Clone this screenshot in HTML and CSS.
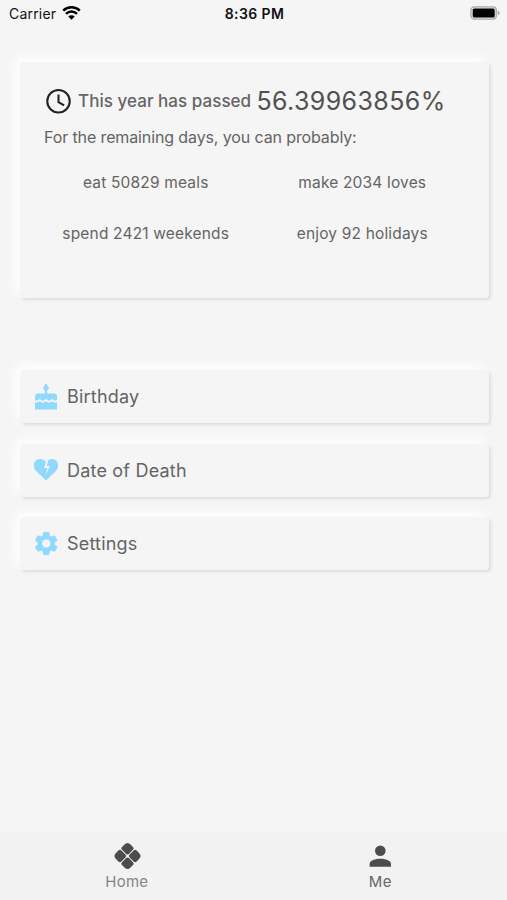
FILE: index.html
```html
<!DOCTYPE html>
<html lang="en">
<head>
<meta charset="utf-8">
<title>Life progress</title>
<link rel="stylesheet" href="styles.css">
</head>
<body>
<header class="status">
  <div class="carrier"><span>Carrier</span>
    <svg width="19" height="14" viewBox="0 0 19 14" fill="none" stroke="#000" stroke-width="2.5"><path d="M1.2 4.7a12 12 0 0 1 16.6 0M4 7.8a8 8 0 0 1 11 0"/><path d="M6.3 10.5a4.6 4.6 0 0 1 6.4 0L9.5 13.7z" fill="#000" stroke="none"/></svg>
  </div>
  <time class="clock">8:36 PM</time>
  <svg class="battery" width="30" height="14" viewBox="0 0 30 14"><rect x=".9" y=".9" width="25.4" height="12.2" rx="3.4" fill="#e5e5e5" stroke="#a9a9a9" stroke-width="1.3"/><rect x="2.7" y="2.5" width="22" height="9" rx="1.6"/><path d="M27.7 4.6q2 .8 2 2.4t-2 2.4z" fill="#aaa"/></svg>
</header>
<main>
  <section class="card summary">
    <div class="headline">
      <svg width="29" height="29" viewBox="0 0 24 24" fill="none" stroke="#222" stroke-width="1.7"><circle cx="12" cy="11.800" r="9.300"/><path d="M12 6.300V12.600l4.600 2.600"/></svg>
      <span class="label">This year has passed</span><strong class="percent">56.39963856%</strong>
    </div>
    <p class="remaining">For the remaining days, you can probably:</p>
    <div class="stats"><span>eat 50829 meals</span><span>make 2034 loves</span><span>spend 2421 weekends</span><span>enjoy 92 holidays</span></div>
  </section>
  <nav class="menu">
    <a class="card item"><svg width="24" height="28" viewBox="0 0 24 28"><path d="M12 .2l3.200 5.300-2.100 2v3H20a3 3 0 0 1 3 3v3.500c-2 1.200-3.200.2-4.700-1.300-2.300 2.400-4 2.400-6.300 0-2.300 2.400-4 2.400-6.300 0-1.500 1.500-2.700 2.500-4.700 1.300v-3.500a3 3 0 0 1 3-3h6.900v-3L8.800 5.500z"/><path d="M1 19.200c2 .7 3.400.2 4.700-.9 2.300 1.800 4 1.800 6.300 0 2.300 1.800 4 1.800 6.300 0 1.300 1.100 2.700 1.600 4.700.9v7.200H1z"/></svg><span>Birthday</span></a>
    <a class="card item"><svg class="heart" width="26" height="28" viewBox="0 0 26 28"><path d="M13 24.600L3.300 15.300C-1 11 .5 2.900 7.200 2.900c2.300 0 4.300 1.100 5.800 3.200 1.500-2.100 3.500-3.200 5.800-3.200 6.700 0 8.200 8.100 3.900 12.400z"/><path class="crack" d="M13.200 5.600l-2 6.300h3.100L12.800 19.600l3.900-9.700h-2.900l1.500-5.800z"/></svg><span>Date of Death</span></a>
    <a class="card item"><svg class="gear" width="28" height="28" viewBox="0 0 24 24"><g transform="translate(.2 -.4)"><path d="M19.140 12.940c.04-.3.060-.610.060-.940s-.020-.640-.070-.940l2.030-1.580a.49.49 0 0 0 .12-.61l-1.920-3.320a.488.488 0 0 0-.59-.22l-2.390.96c-.5-.38-1.030-.7-1.620-.94l-.36-2.540a.484.484 0 0 0-.48-.41h-3.840c-.24 0-.43.17-.47.41l-.36 2.540c-.59.24-1.130.57-1.620.94l-2.390-.96c-.22-.08-.47 0-.59.22L2.740 8.870c-.12.21-.08.47.12.61l2.030 1.580c-.05.3-.09.63-.09.94s.02.64.07.94l-2.030 1.580a.49.49 0 0 0-.12.61l1.920 3.320c.12.22.37.29.59.22l2.390-.96c.5.38 1.030.7 1.620.94l.36 2.540c.05.24.24.41.48.41h3.840c.24 0 .44-.17.47-.41l.36-2.540c.59-.24 1.130-.56 1.620-.94l2.390.96c.22.08.47 0 .59-.22l1.920-3.320c.12-.22.07-.47-.12-.61z"/><circle class="hub" cx="12" cy="12" r="3.500"/></g></svg><span>Settings</span></a>
  </nav>
</main>
<footer class="tabs">
  <a class="tab home"><svg width="28" height="28" viewBox="0 0 28 28"><g transform="translate(.5 0) rotate(45 14 14)"><path id="petal" d="M8 3.700h3.400q2.100 0 2.100 2.100v5.700q0 2-2 2H5.800q-2.100 0-2.100-2.100V8Q3.700 3.700 8 3.700z"/><use href="#petal" transform="rotate(90 14 14)"/><use href="#petal" transform="rotate(180 14 14)"/><use href="#petal" transform="rotate(270 14 14)"/></g></svg><span>Home</span></a>
  <a class="tab me"><svg width="28" height="28" viewBox="0 0 28 28"><circle cx="14.300" cy="8.700" r="5.300"/><path d="M3.600 24.700v-2.800c0-3.600 6-5.200 10.700-5.200S25 18.300 25 21.900v2.800z"/></svg><span>Me</span></a>
</footer>
</body>
</html>
```

FILE: styles.css
```css
* { box-sizing: border-box; }
body { margin: 0; height: 900px; display: flex; flex-direction: column; background: #f5f5f5; color: #646464; font-family: Inter, "Liberation Sans", sans-serif; }
svg { display: block; flex: none; }
.status { height: 26px; padding: 0 7px 0 9px; display: grid; grid-template-columns: 1fr auto 1fr; align-items: center; color: #111; }
.carrier { display: flex; align-items: center; gap: 6px; font-size: 14px; letter-spacing: .2px; }
.clock { font-size: 14px; font-weight: 600; letter-spacing: .4px; }
.battery { justify-self: end; }
main { flex: 1; padding: 36px 18px 0 20px; }
.card { background: #f5f5f5; border-radius: 4px; box-shadow: 2px 2px 3px #dedede, -5px -5px 12px #fff; }
.summary { height: 236px; padding: 22px 24px; }
.headline { height: 34px; display: flex; align-items: center; white-space: nowrap; }
.label { margin-left: 5px; width: 178.500px; font-size: 17px; font-weight: 500; letter-spacing: .04px; }
.percent { font-size: 25px; font-weight: 400; letter-spacing: .38px; color: #505050; }
.remaining { margin: 9px 0 0; font-size: 16px; line-height: 20px; letter-spacing: -.12px; }
.stats { margin: 10px -7px 0; display: grid; grid-template-columns: 1fr 1fr; grid-auto-rows: 51px; place-items: center; font-size: 15.500px; letter-spacing: .17px; }
.stats span:nth-child(even) { margin-right: 2px; }
.menu { margin-top: 72px; display: grid; grid-auto-rows: 53px; gap: 20.500px; }
.item { display: flex; align-items: center; padding-left: 14px; font-size: 18px; letter-spacing: .2px; }
.item svg { fill: #90d9fc; }
.item .heart { margin: 0 -1px; }
.item .gear { margin: 0 -2px; stroke: #90d9fc; stroke-width: .6; stroke-linejoin: round; }
.item span { margin-left: 9px; }
.item .crack, .item .hub { fill: #f5f5f5; stroke: none; }
.tabs { height: 67px; display: grid; grid-template-columns: 1fr 1fr; background: #f2f2f2; }
.tab { display: flex; flex-direction: column; align-items: center; padding-top: 9px; font-size: 15px; line-height: 24px; letter-spacing: .25px; }
.tab svg { fill: #4c4c4c; }
.home { color: #848484; }
```
